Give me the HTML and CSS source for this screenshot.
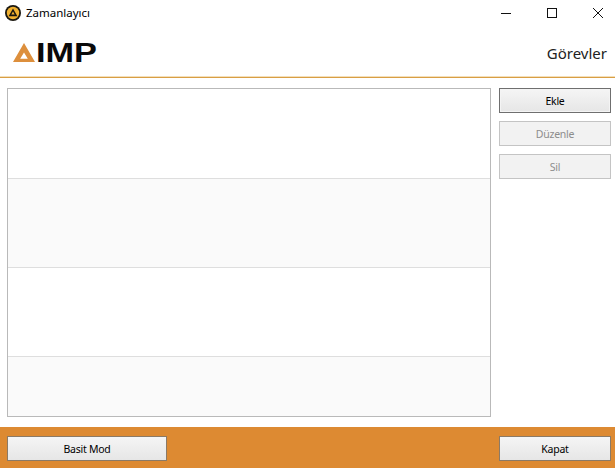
FILE: index.html
```html
<!DOCTYPE html>
<html lang="tr">
<head>
<meta charset="utf-8">
<title>Zamanlayıcı</title>
<link rel="stylesheet" href="styles.css">
</head>
<body>
<div class="window">
  <div class="titlebar">
    <svg class="app-icon" width="16" height="16" viewBox="0 0 16 16"><circle cx="8" cy="8" r="8" fill="#1a1710"/><circle cx="8" cy="8" r="6.2" fill="#f0b030"/><path d="M8 3.6 L12.4 11.2 H3.6 Z M8 6.6 L6.3 9.6 H9.7 Z" fill="#1a1710" fill-rule="evenodd"/></svg>
    <span class="title">Zamanlayıcı</span>
    <div class="controls">
      <svg width="12" height="12" viewBox="0 0 12 12"><path d="M1 6.5H11" stroke="#111" fill="none"/></svg>
      <svg width="12" height="12" viewBox="0 0 12 12"><rect x="1.5" y="1.5" width="9" height="9" stroke="#111" fill="none"/></svg>
      <svg width="12" height="12" viewBox="0 0 12 12"><path d="M1 1L11 11M11 1L1 11" stroke="#111" fill="none"/></svg>
    </div>
  </div>
  <header class="header">
    <div class="logo">
      <svg class="logo-mark" width="22" height="19" viewBox="0 0 22 19"><path d="M11 0 L22 19 H0 Z M11 9.5 L7.2 15.8 H14.8 Z" fill="#dd8f3c" fill-rule="evenodd"/></svg>
      <span class="logo-text">IMP</span>
    </div>
    <span class="heading">Görevler</span>
  </header>
  <main class="content">
    <div class="list">
      <div class="row first"></div>
      <div class="row alt"></div>
      <div class="row"></div>
      <div class="row alt last"></div>
    </div>
    <div class="side">
      <button class="btn focus">Ekle</button>
      <button class="btn" disabled>Düzenle</button>
      <button class="btn" disabled>Sil</button>
    </div>
  </main>
  <footer class="footer">
    <button class="btn wide">Basit Mod</button>
    <button class="btn">Kapat</button>
  </footer>
</div>
</body>
</html>
```
FILE: styles.css
```css
* { box-sizing: border-box; }
html, body { margin: 0; height: 100%; background: #fff; }
body { font-family: "Noto Sans", "Open Sans", sans-serif; font-size: 12px; color: #111; overflow: hidden; }
.window { width: 615px; height: 468px; display: flex; flex-direction: column; }
.titlebar { height: 28px; display: flex; align-items: center; padding: 0 0 3px 5px; flex: none; }
.app-icon { flex: none; }
.title { margin-left: 5px; font-size: 11.5px; color: #000; }
.controls { margin-left: auto; display: flex; gap: 34px; padding-right: 11px; }
.controls svg { display: block; }
.header { height: 50px; flex: none; display: flex; align-items: center; justify-content: space-between; padding: 0 8px 0 13px; border-bottom: 1px solid #d99e44; box-shadow: inset 0 -1px 0 #f3dfba; }
.logo { display: flex; align-items: center; }
.logo-mark { display: block; flex: none; }
.logo-text { font-family: "Liberation Sans", sans-serif; font-weight: 700; font-size: 27px; line-height: 19px; color: #0a0a0a; transform: scaleX(1.27); transform-origin: left center; margin: 1px 0 0 1px; }
.heading { font-size: 15px; color: #222; }
.content { flex: 1; display: flex; gap: 8px; padding: 10px 4px 10px 7px; min-height: 0; }
.list { width: 484px; border: 1px solid #b9b9b9; display: flex; flex-direction: column; background: #fff; }
.row { height: 89px; border-bottom: 1px solid #dedede; flex: none; }
.row.first { height: 90px; }
.row.alt { background: #fafafa; }
.row.last { flex: 1; border-bottom: 0; }
.side { width: 112px; display: flex; flex-direction: column; gap: 8px; }
.btn { width: 112px; height: 25px; padding: 0; border: 1px solid #8a8a8a; background: linear-gradient(#f5f5f5, #e6e6e6); font-family: "Noto Sans", sans-serif; font-size: 10.5px; letter-spacing: -0.25px; color: #000; border-radius: 0; }
.btn.focus { border-color: #6f6f6f; box-shadow: inset 0 0 0 1px #f4f4f4; }
.btn:disabled { border-color: #c4c4c4; background: #f2f2f2; color: #8d8d8d; }
.btn.wide { width: 160px; }
.footer { height: 41px; flex: none; background: #dd8a32; display: flex; justify-content: space-between; align-items: flex-start; padding: 9px 4px 0 7px; }
.footer .btn { height: 25px; border-color: #8b7a66; }
```
